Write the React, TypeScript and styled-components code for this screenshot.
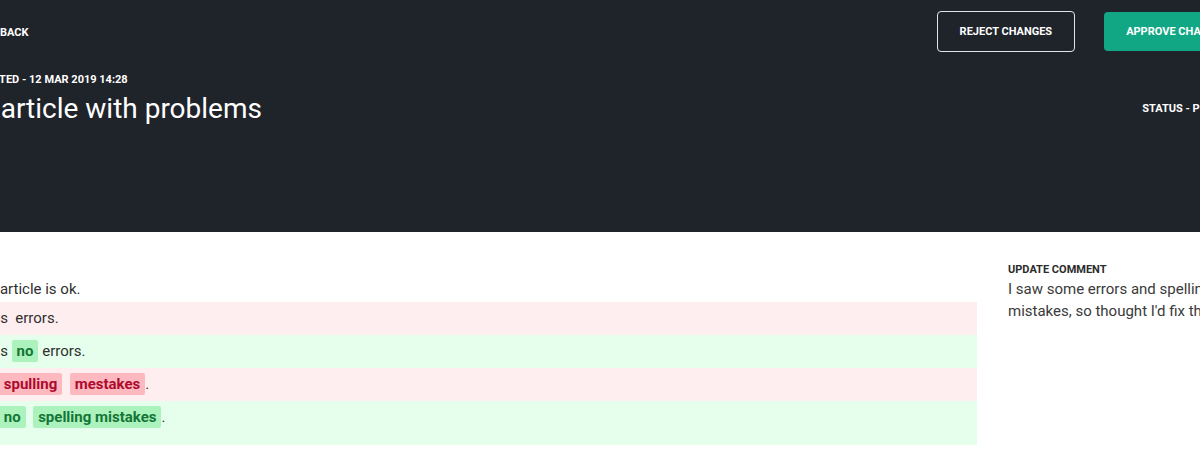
import React from 'react';
import styled, {createGlobalStyle} from 'styled-components';
import {ChevronLeft} from 'lucide-react';

const GlobalStyle = createGlobalStyle`
    html, body {
        margin: 0;
        padding: 0;
        background: #ffffff;
        overflow: hidden;
    }

    body {
        font-family: Roboto, 'Liberation Sans', Arial, sans-serif;
        -webkit-font-smoothing: antialiased;
    }
`;

const Header = styled.header`
    background: #1f232a;
    height: 232px;
    color: #ffffff;
`;

// page content is wider than the window, so it bleeds off both edges
const Inner = styled.div`
    width: 1280px;
    margin-left: -29px;
`;

const TopRow = styled.div`
    display: flex;
    justify-content: space-between;
    align-items: center;
    padding-top: 11px;
`;

const BackLink = styled.a`
    display: flex;
    align-items: center;
    gap: 13px;
    padding-top: 3px;
    font-size: 11px;
    font-weight: 700;
    line-height: 14px;
    color: #ffffff;
    text-transform: uppercase;
    text-decoration: none;
    cursor: pointer;
`;

const Actions = styled.div`
    display: flex;
    gap: 29px;
`;

interface buttonProps {
    $primary?: boolean;
}

const Button = styled.button<buttonProps>`
    height: ${props => (props.$primary ? '39px' : '41px')};
    margin-top: ${props => (props.$primary ? '1px' : 0)};
    padding: 0 22px;
    border-radius: 4px;
    border: ${props => (props.$primary ? 'none' : '1px solid #e4e4e4')};
    background: ${props => (props.$primary ? '#12a784' : 'transparent')};
    color: #ffffff;
    font-family: inherit;
    font-size: 11px;
    font-weight: 700;
    text-transform: uppercase;
    cursor: pointer;
`;

const Meta = styled.div`
    margin-top: 21px;
    font-size: 11px;
    font-weight: 700;
    line-height: 14px;
    text-transform: uppercase;
`;

const TitleRow = styled.div`
    display: flex;
    justify-content: space-between;
    align-items: center;
    margin-top: 5px;
`;

const Title = styled.h1`
    margin: 0 0 0 -11px;
    font-size: 28px;
    font-weight: 400;
    line-height: 34px;
`;

const Status = styled.div`
    font-size: 11px;
    font-weight: 700;
    line-height: 14px;
    text-transform: uppercase;
`;

const Main = styled.main`
    display: grid;
    grid-template-columns: 1fr 243px;
    gap: 31px;
    padding-top: 31px;
`;

const Content = styled.div`
    padding-top: 15px;
    font-size: 15px;
    color: #2f2f2f;
`;

const Paragraph = styled.p`
    margin: 0 0 2px;
    line-height: 22px;
`;

interface rowProps {
    $kind: 'removed' | 'added';
}

const DiffRow = styled.div<rowProps>`
    background: ${props => (props.$kind === 'removed' ? '#ffeef0' : '#e6ffed')};
    padding: 5px 0;
    line-height: 23px;
    white-space: pre-wrap;

    &:last-child {
        padding-bottom: 16px;
    }
`;

const Word = styled.span<rowProps>`
    padding: 2px 5px;
    border-radius: 2px;
    font-weight: 700;
    background: ${props => (props.$kind === 'removed' ? '#fdb8c0' : '#acf2bd')};
    color: ${props => (props.$kind === 'removed' ? '#ad0a2c' : '#137636')};
`;

const Sidebar = styled.aside`
    color: #333333;
`;

const Label = styled.div`
    font-size: 11px;
    font-weight: 700;
    line-height: 14px;
    text-transform: uppercase;
    color: #2b2b2b;
`;

const Comment = styled.p`
    margin: 1px 0 0;
    font-size: 15px;
    line-height: 22px;
    color: #3a3a3a;
`;

const App = () => {
    return (
        <>
            <GlobalStyle />
            <Header>
                <Inner>
                    <TopRow>
                        <BackLink>
                            <ChevronLeft size={16} strokeWidth={2.5} />
                            Back
                        </BackLink>
                        <Actions>
                            <Button>Reject changes</Button>
                            <Button $primary>Approve changes</Button>
                        </Actions>
                    </TopRow>
                    <Meta>Updated - 12 Mar 2019 14:28</Meta>
                    <TitleRow>
                        <Title>An article with problems</Title>
                        <Status>Status - Published</Status>
                    </TitleRow>
                </Inner>
            </Header>
            <Inner>
                <Main>
                    <Content>
                        <Paragraph>The article is ok.</Paragraph>
                        <DiffRow $kind="removed">{'It has  errors.'}</DiffRow>
                        <DiffRow $kind="added">
                            {'It has '}
                            <Word $kind="added">no</Word>
                            {' errors.'}
                        </DiffRow>
                        <DiffRow $kind="removed">
                            {'It is '}
                            <Word $kind="removed">spulling</Word>
                            {'  '}
                            <Word $kind="removed">mestakes</Word>
                            {'.'}
                        </DiffRow>
                        <DiffRow $kind="added">
                            {'It is '}
                            <Word $kind="added">no</Word>
                            {'  '}
                            <Word $kind="added">spelling mistakes</Word>
                            {'.'}
                        </DiffRow>
                    </Content>
                    <Sidebar>
                        <Label>Update comment</Label>
                        <Comment>
                            I saw some errors and spelling mistakes, so thought I'd fix them.
                        </Comment>
                    </Sidebar>
                </Main>
            </Inner>
        </>
    );
};

export default App;
